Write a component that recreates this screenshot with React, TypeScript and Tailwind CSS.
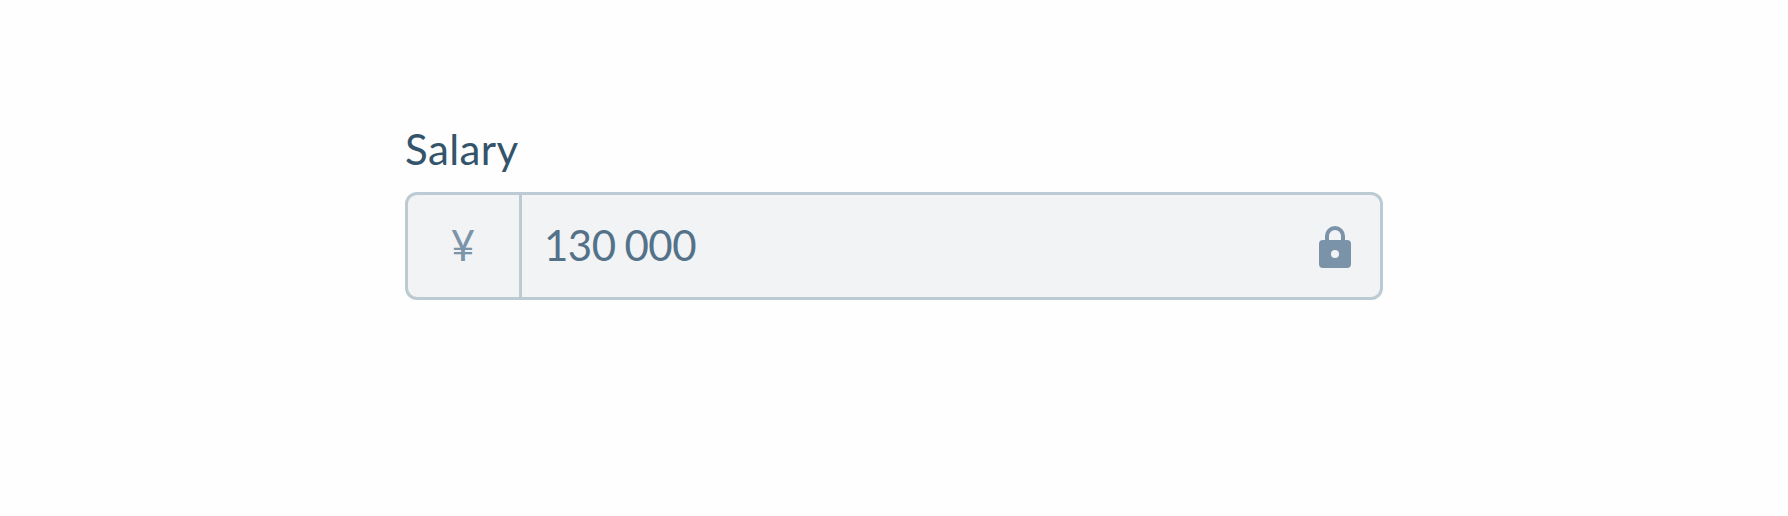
export default function App() {
  return (
    <main className="flex h-[516px] w-full justify-center bg-[#fefefe] pt-[122px] font-['Lato',sans-serif]">
      <div className="w-[978px]">
        <label htmlFor="salary" className="block h-[70px] text-[42px] leading-[54px] tracking-[0.4px] text-[#34546b]">
          Salary
        </label>
        <div className="flex h-[108px] items-stretch overflow-hidden rounded-[12px] border-[3px] border-[#bbcad3] bg-[#f2f3f5]">
          <div className="flex w-[114px] items-center justify-center border-r-[3px] border-[#bbcad3] pr-[1px] pb-[2px] text-[42px] text-[#7a94aa]">
            ¥
          </div>
          <input
            id="salary"
            readOnly
            value="130 000"
            className="min-w-0 flex-1 bg-transparent pb-[2px] pl-[22px] text-[42px] tracking-[-0.5px] [word-spacing:-1.4px] text-[#537289] outline-none"
          />
          <div className="flex w-[90px] items-center justify-center pt-[2px]">
            <svg viewBox="0 0 32 42" className="h-[42px] w-[32px] text-[#7a93a8]" fill="currentColor">
              <path fillRule="evenodd" d="M4 14h24a4 4 0 0 1 4 4v20a4 4 0 0 1-4 4H4a4 4 0 0 1-4-4V18a4 4 0 0 1 4-4Zm12 10a4 4 0 1 0 0 8 4 4 0 0 0 0-8Z" />
              <path d="M8 15v-5a8 8 0 0 1 16 0v5" fill="none" stroke="currentColor" strokeWidth="4" />
            </svg>
          </div>
        </div>
      </div>
    </main>
  );
}
